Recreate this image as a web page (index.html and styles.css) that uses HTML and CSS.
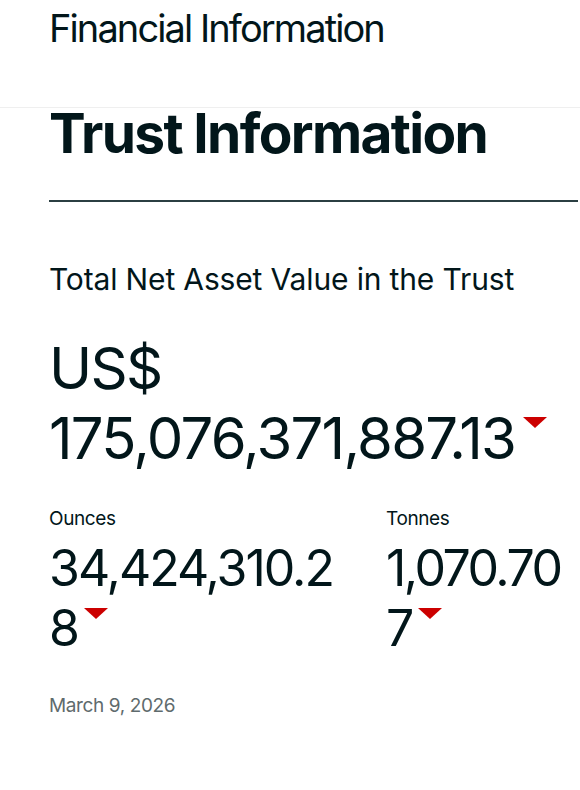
FILE: index.html
```html
<!DOCTYPE html>
<html lang="en">
<head>
<meta charset="utf-8">
<title>Trust Information</title>
<link rel="stylesheet" href="styles.css">
</head>
<body>
<header class="topbar">
  <div class="topbar-title">Financial Information</div>
</header>
<main class="content">
  <h1 class="page-title">Trust Information</h1>
  <hr class="rule">
  <h2 class="nav-label">Total Net Asset Value in the Trust</h2>
  <div class="nav-value">US$ 175,076,371,887.13<span class="down"></span></div>
  <div class="stats">
    <div class="stat stat-oz">
      <div class="stat-label">Ounces</div>
      <div class="stat-value">34,424,310.28<span class="down"></span></div>
    </div>
    <div class="stat stat-t">
      <div class="stat-label">Tonnes</div>
      <div class="stat-value">1,070.707<span class="down"></span></div>
    </div>
  </div>
  <p class="date">March 9, 2026</p>
</main>
</body>
</html>
```

FILE: styles.css
```css
html, body {
  margin: 0;
  padding: 0;
  background: #ffffff;
}
body {
  font-family: Inter, "Noto Sans", sans-serif;
  color: #02161a;
  overflow: hidden;
}
.topbar {
  height: 108px;
  border-bottom: 1px solid #efefef;
  padding-left: 49px;
  box-sizing: border-box;
}
.topbar-title {
  font-size: 38px;
  font-weight: 400;
  letter-spacing: -0.05em;
  line-height: 56px;
}
.content {
  margin-left: 49px;
  margin-right: 2px;
}
.page-title {
  margin: 0;
  font-size: 55px;
  font-weight: 700;
  letter-spacing: -0.03em;
  line-height: 50px;
}
.rule {
  margin: 42px 0 0 0;
  border: 0;
  height: 2px;
  background: #2b3f42;
}
.nav-label {
  margin: 57px 0 0 0;
  font-size: 30px;
  font-weight: 400;
  letter-spacing: -0.005em;
  line-height: 40px;
}
.nav-value {
  margin-top: 34px;
  font-size: 58px;
  line-height: 70px;
  letter-spacing: -0.03em;
  width: 510px;
}
.down {
  display: inline-block;
  width: 0;
  height: 0;
  border-left: 12px solid transparent;
  border-right: 12px solid transparent;
  border-top: 11px solid #cc0000;
  vertical-align: top;
  margin-top: 14px;
  margin-left: 8px;
}
.stats {
  display: flex;
  gap: 37px;
  margin-top: 34px;
}
.stat-oz { width: 300px; flex: none; }
.stat-t { width: 195px; flex: none; }
.stat-label {
  font-size: 19px;
  line-height: 24px;
  letter-spacing: -0.02em;
}
.stat-value {
  margin-top: 7px;
  font-size: 50px;
  line-height: 60px;
  letter-spacing: -0.04em;
  word-break: break-all;
}
.stat-t .stat-value {
  letter-spacing: -0.05em;
}
.stat-value .down {
  margin-top: 10px;
  margin-left: 6px;
}
.date {
  margin: 36px 0 0 0;
  font-size: 19px;
  line-height: 24px;
  letter-spacing: -0.02em;
  color: #5f6b6d;
}
```
